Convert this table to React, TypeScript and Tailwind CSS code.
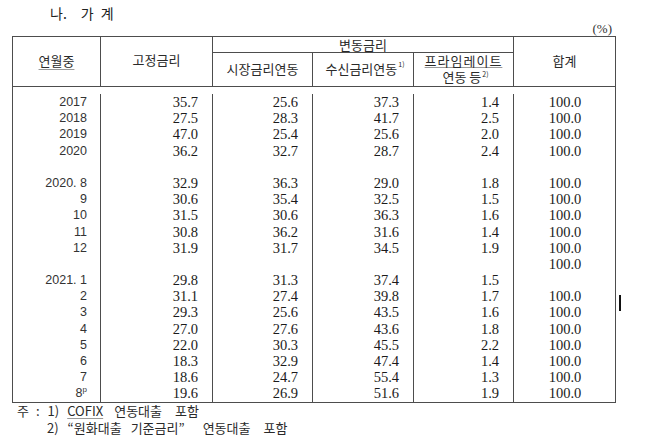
import React from "react";

const rows: { y: string; a: string; b: string; c: string; d: string; t: string; sup?: boolean }[] = [
  { y: "2017", a: "35.7", b: "25.6", c: "37.3", d: "1.4", t: "100.0" },
  { y: "2018", a: "27.5", b: "28.3", c: "41.7", d: "2.5", t: "100.0" },
  { y: "2019", a: "47.0", b: "25.4", c: "25.6", d: "2.0", t: "100.0" },
  { y: "2020", a: "36.2", b: "32.7", c: "28.7", d: "2.4", t: "100.0" },
  { y: "", a: "", b: "", c: "", d: "", t: "" },
  { y: "2020. 8", a: "32.9", b: "36.3", c: "29.0", d: "1.8", t: "100.0" },
  { y: "9", a: "30.6", b: "35.4", c: "32.5", d: "1.5", t: "100.0" },
  { y: "10", a: "31.5", b: "30.6", c: "36.3", d: "1.6", t: "100.0" },
  { y: "11", a: "30.8", b: "36.2", c: "31.6", d: "1.4", t: "100.0" },
  { y: "12", a: "31.9", b: "31.7", c: "34.5", d: "1.9", t: "100.0" },
  { y: "", a: "", b: "", c: "", d: "", t: "100.0" },
  { y: "2021. 1", a: "29.8", b: "31.3", c: "37.4", d: "1.5", t: "" },
  { y: "2", a: "31.1", b: "27.4", c: "39.8", d: "1.7", t: "100.0" },
  { y: "3", a: "29.3", b: "25.6", c: "43.5", d: "1.6", t: "100.0" },
  { y: "4", a: "27.0", b: "27.6", c: "43.6", d: "1.8", t: "100.0" },
  { y: "5", a: "22.0", b: "30.3", c: "45.5", d: "2.2", t: "100.0" },
  { y: "6", a: "18.3", b: "32.9", c: "47.4", d: "1.4", t: "100.0" },
  { y: "7", a: "18.6", b: "24.7", c: "55.4", d: "1.3", t: "100.0" },
  { y: "8", a: "19.6", b: "26.9", c: "51.6", d: "1.9", t: "100.0", sup: true },
];

const kr = "font-['Noto_Sans_CJK_KR',sans-serif]";
const num = "font-['Liberation_Serif',serif] text-[14.5px] text-[#1b1b1b]";

export default function App() {
  return (
    <div className="relative w-[658px] h-[438px] bg-white overflow-hidden text-[#1d1d1d]">
      <div className={`${kr} pl-[50px] pt-[3px] h-[22px] text-[14px] leading-[20px] flex items-center text-[#222]`}>
        <span>나.</span>
        <span className="ml-[14px]">가</span>
        <span className="ml-[7px]">계</span>
      </div>
      <div className="w-[612px] h-[14px] flex justify-end items-center font-['Liberation_Serif',serif] text-[13px] leading-[14px] text-[#333]">
        (%)
      </div>

      <div className="ml-[12px] w-[604px] border border-[#4d4d4d]">
        {/* header */}
        <div className={`${kr} grid grid-cols-[88px_112px_100px_101px_100px_101px] grid-rows-[16px_34px] text-[13px] text-[#2a2a2a]`}>
          <div className="row-span-2 border-r border-b border-[#4d4d4d] flex items-center justify-center pb-[2px]">
            <span className="underline decoration-[#9a9a9a] underline-offset-[3px] decoration-1">연월중</span>
          </div>
          <div className="row-span-2 border-r border-b border-[#4d4d4d] flex items-center justify-center pb-[4px]">
            고정금리
          </div>
          <div className="col-span-3 border-r border-b border-[#4d4d4d] flex items-center justify-center leading-[15px]">
            변동금리
          </div>
          <div className="row-span-2 border-b border-[#4d4d4d] flex items-center justify-center pb-[2px]">
            합계
          </div>
          <div className="border-r border-b border-[#4d4d4d] flex items-center justify-center pb-[1px]">
            시장금리연동
          </div>
          <div className="border-r border-b border-[#4d4d4d] flex items-center justify-center pb-[1px] pl-[4px]">
            수신금리연동<span className="relative -top-[5px] text-[7px] leading-[7px] ml-[1px]">1)</span>
          </div>
          <div className="border-r border-b border-[#4d4d4d] flex flex-col items-center justify-center pb-[1px]">
            <span className="h-[16px] leading-[16px] underline decoration-[#9a9a9a] underline-offset-[1px] decoration-1 tracking-[1px]">
              프라임레이트
            </span>
            <span className="h-[16px] leading-[16px] pl-[4px]">
              연동 등<span className="relative -top-[5px] text-[7px] leading-[7px] ml-[1px]">2)</span>
            </span>
          </div>
        </div>

        {/* body */}
        <div className="grid grid-cols-[88px_112px_100px_101px_100px_101px] pt-[7px]">
          <div className="border-r border-[#4d4d4d] flex flex-col items-end pr-[13px] font-['Liberation_Sans',sans-serif] text-[12.5px] text-[#333] whitespace-pre">
            {rows.map((r, i) => (
              <div key={i} className="h-[16.2px] leading-[16.2px]">
                {r.y}
                {r.sup && <span className="relative -top-[5px] text-[8px] leading-[8px]">p</span>}
              </div>
            ))}
          </div>
          {(["a", "b", "c", "d"] as const).map((k) => (
            <div key={k} className={`border-r border-[#4d4d4d] flex flex-col items-end pr-[14px] ${num}`}>
              {rows.map((r, i) => (
                <div key={i} className="h-[16.2px] leading-[16.2px]">
                  {r[k]}
                </div>
              ))}
            </div>
          ))}
          <div className={`flex flex-col items-center pl-[1px] ${num}`}>
            {rows.map((r, i) => (
              <div key={i} className="h-[16.2px] leading-[16.2px]">
                {r.t}
              </div>
            ))}
          </div>
        </div>
      </div>

      {/* footnotes */}
      <div className={`${kr} text-[13px] text-[#2a2a2a] leading-[16px]`}>
        <div className="flex items-center pl-[17px] h-[17px]">
          <span>주</span>
          <span className="ml-[7px]">:</span>
          <span className="ml-[8px]">1)</span>
          <span className="ml-[8px] underline decoration-[#9a9a9a] underline-offset-[2px]">COFIX</span>
          <span className="ml-[11px]">연동대출</span>
          <span className="ml-[13px]">포함</span>
        </div>
        <div className="flex items-center pl-[47px] h-[17px]">
          <span>2)</span>
          <span className="ml-[9px]">“원화대출</span>
          <span className="ml-[9px]">기준금리”</span>
          <span className="ml-[18px]">연동대출</span>
          <span className="ml-[13px]">포함</span>
        </div>
      </div>

      <div className="absolute left-[619px] top-[295px] w-[2px] h-[16px] bg-[#111]" />
    </div>
  );
}
